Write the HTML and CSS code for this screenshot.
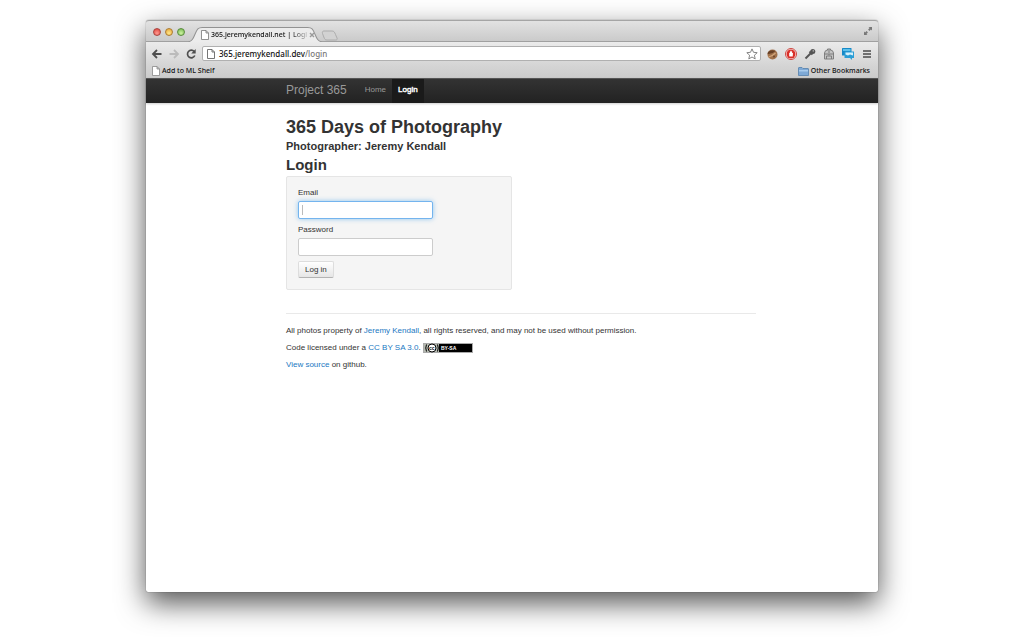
FILE: index.html
```html
<!DOCTYPE html>
<html lang="en">
<head>
<meta charset="utf-8">
<meta name="viewport" content="width=device-width, initial-scale=1">
<title>365.jeremykendall.net | Login</title>
<link rel="stylesheet" href="styles.css">
</head>
<body>
<div class="window">
  <header class="chrome">
    <div class="tabstrip">
      <div class="lights">
        <button class="light red" aria-label="Close"></button>
        <button class="light amber" aria-label="Minimize"></button>
        <button class="light green" aria-label="Zoom"></button>
      </div>
      <div class="tab">
        <svg class="tab-shape" viewBox="0 0 132 15" preserveAspectRatio="none" aria-hidden="true"><path d="M0 15C4 14 5 12 7 7C9 2 10 .5 14 .5H118C122 .5 123 2 125 7C127 12 128 14 132 15Z" fill="#ececec"/><path d="M0 15C4 14 5 12 7 7C9 2 10 .5 14 .5H118C122 .5 123 2 125 7C127 12 128 14 132 15" fill="none" stroke="#929292"/></svg>
        <svg class="page-icon" viewBox="0 0 8 10" aria-hidden="true"><path d="M.5.5h4.500l2.500 2.500v6.500h-7zM5 .5v2.500h2.500" fill="#fff" stroke="#777" stroke-width=".8"/></svg>
        <span class="tab-title">365.jeremykendall.net | Logi</span>
        <button class="tab-close" aria-label="Close tab"><svg viewBox="0 0 6 6"><path d="M1 1l4 4M5 1L1 5" stroke="#999" stroke-width="1.400"/></svg></button>
      </div>
      <button class="new-tab" aria-label="New tab"><svg viewBox="0 0 18 11"><path d="M3 1H11C13 1 13.500 2 14.500 4.500L16 8C16.500 9.500 16 10 14.500 10H6C4 10 3.500 9 2.800 7L1.500 3.500C1 2 1.500 1 3 1Z" fill="#d2d2d2" stroke="#a8a8a8" stroke-width=".9"/></svg></button>
      <button class="fullscreen" aria-label="Full screen"><svg viewBox="0 0 10 10"><path d="M5.500 1H9v3.500L7.900 3.400 6.400 4.900 5.100 3.600 6.600 2.100zM4.500 9H1V5.500l1.100 1.100L3.600 5.100 4.900 6.400 3.400 7.900z" fill="#777"/></svg></button>
    </div>
    <div class="toolbar">
      <button class="tool" aria-label="Back"><svg viewBox="0 0 12 12"><path d="M6 2L2 6l4 4M2 6h8.500" fill="none" stroke="#4e4e4e" stroke-width="1.800"/></svg></button>
      <button class="tool" aria-label="Forward"><svg viewBox="0 0 12 12"><path d="M6 2l4 4-4 4M10 6H1.500" fill="none" stroke="#bbb" stroke-width="1.800"/></svg></button>
      <button class="tool" aria-label="Reload"><svg viewBox="0 0 12 12"><path d="M9.200 3.500A3.800 3.800 0 1 0 9.800 7.500" fill="none" stroke="#4e4e4e" stroke-width="1.700"/><path d="M10.700 1v4.600H6.200z" fill="#4e4e4e"/></svg></button>
      <div class="omnibox">
        <svg class="page-icon" viewBox="0 0 8 10" aria-hidden="true"><path d="M.5.5h4.500l2.500 2.500v6.500h-7zM5 .5v2.500h2.500" fill="#fff" stroke="#666" stroke-width=".9"/></svg>
        <span class="url">365.jeremykendall.dev<span class="path">/login</span></span>
        <button class="star" aria-label="Bookmark this page"><svg viewBox="0 0 12 12"><path d="M6 .9l1.500 3.400 3.700.4-2.800 2.500.8 3.700L6 9l-3.200 1.900.8-3.700L.8 4.700l3.700-.4z" fill="#fff" stroke="#777" stroke-width=".9"/></svg></button>
      </div>
      <div class="extensions">
        <button class="tool" aria-label="Cookies"><svg viewBox="0 0 12 12"><circle cx="6.500" cy="6.500" r="5" fill="#a0714b"/><path d="M2 4Q5 1 9.500 3Q6 6.500 1.500 6z" fill="#684025"/><path d="M2.500 9Q6 8.500 9.500 5" stroke="#d3a67a" fill="none" stroke-width="1.200"/><circle cx="8" cy="8.500" r="1" fill="#704629"/></svg></button>
        <button class="tool" aria-label="Ad blocker"><svg viewBox="0 0 12 12"><circle cx="6" cy="6" r="5.500" fill="#fff" stroke="#c9302a" stroke-width=".9"/><circle cx="6" cy="6" r="4.500" fill="#d92f28"/><path d="M4.200 8.300V5l.7-.2V3.400h.7v-.6h.8v.6h.7v1.300l.9.500L7.700 8.600H4.900z" fill="#fff"/></svg></button>
        <button class="tool" aria-label="Eyedropper"><svg viewBox="0 0 12 12"><path d="M1.500 10.500L7 5" stroke="#555" stroke-width="2"/><path d="M5.500 3.500l3 3" stroke="#555" stroke-width="2"/><circle cx="8.800" cy="3.400" r="2.500" fill="#555"/><circle cx="9.300" cy="2.900" r=".8" fill="#aaa"/></svg></button>
        <button class="tool" aria-label="Backpack"><svg viewBox="0 0 12 12"><path d="M1.500 11V5Q2 2 4.500 2h3Q10 2 10.500 5v6z" fill="#c4c4c4" stroke="#808080"/><path d="M4.500 2V1h3v1M1.500 6h9M3.500 8h5v3M3.500 8v3M5 4h2M6 6v1.500" fill="none" stroke="#777" stroke-width=".9"/></svg></button>
        <button class="tool" aria-label="Chat"><svg viewBox="0 0 12 12"><rect x="0" y="0" width="9.500" height="7.500" rx=".6" fill="#1689c7"/><path d="M1 1h7.500v2H1z" fill="#5cc0ea"/><path d="M2.500 3.500H12V10h-2v2L8 10H2.500z" fill="#2a9dd5"/><path d="M3.500 4.500H11v3l-3-1-2 1-2.500-1z" fill="#d5f0fb"/></svg></button>
        <button class="tool" aria-label="Menu"><svg viewBox="0 0 12 12"><path d="M2 3h8M2 6h8M2 9h8" stroke="#4b4b4b" stroke-width="1.700"/></svg></button>
      </div>
    </div>
    <div class="bookmarks">
      <a class="bookmark" href="#"><svg class="page-icon" viewBox="0 0 8 10" aria-hidden="true"><path d="M.5.5h4.500l2.500 2.500v6.500h-7zM5 .5v2.500h2.500" fill="#fff" stroke="#888" stroke-width=".8"/></svg>Add to ML Shelf</a>
      <a class="bookmark" href="#"><svg class="folder" viewBox="0 0 11 9" aria-hidden="true"><path d="M.5 8.500V1Q.5.500 1 .5h3l1 1h5q.5 0 .5.500v6.500z" fill="#7ea9d6" stroke="#5480ac" stroke-width=".8"/><path d="M1 3h9v1.500H1z" fill="#a9cbec"/></svg>Other Bookmarks</a>
    </div>
  </header>
  <nav class="navbar">
    <div class="container nav-row">
      <a class="brand" href="#">Project 365</a>
      <a class="nav-link" href="#">Home</a>
      <a class="nav-link active" href="#">Login</a>
    </div>
  </nav>
  <main class="container">
    <h1>365 Days of Photography</h1>
    <h2>Photographer: Jeremy Kendall</h2>
    <h3>Login</h3>
    <form class="well">
      <label for="email">Email</label>
      <div class="field focused"><input id="email" type="text"></div>
      <label for="password">Password</label>
      <div class="field"><input id="password" type="password"></div>
      <button class="btn" type="button">Log in</button>
    </form>
    <footer class="footer">
      <p>All photos property of <a href="#">Jeremy Kendall</a>, all rights reserved, and may not be used without permission.</p>
      <p>Code licensed under a <a href="#">CC BY SA 3.0</a>. <svg class="license" viewBox="0 0 50 10" role="img" aria-label="Creative Commons"><rect x=".5" y=".5" width="49" height="9" fill="#000" stroke="#aaa"/><path d="M1 1h15v8H1z" fill="#b5bab0"/><circle cx="9" cy="5" r="4" fill="#fff" stroke="#000"/><path d="M3.500 1.500Q2 5 3.500 8.500M14.500 1.500Q16 5 14.500 8.500" stroke="#000" fill="none"/><text x="6" y="7" class="cc">cc</text><text x="18" y="7" class="by">BY-SA</text></svg></p>
      <p><a href="#">View source</a> on github.</p>
    </footer>
  </main>
</div>
</body>
</html>
```
FILE: styles.css
```css
* { box-sizing: border-box; }
body {
  margin: 0;
  min-height: 100vh;
  padding: 20px 146px 49px;
  display: flex;
  background: #fff;
  color: #333;
  font: 8px/11px "Liberation Sans", Arial, sans-serif;
  overflow-x: hidden;
}
button { padding: 0; border: 0; background: none; font: inherit; color: inherit; }
svg { display: block; }
a { color: #1a78c2; text-decoration: none; }
.window {
  flex: 1;
  min-width: 0;
  background: #fff;
  border-radius: 3px 3px 2px 2px;
  box-shadow: 0 0 1px rgba(0,0,0,.7), 0 11px 29px rgba(0,0,0,.68);
}
.chrome {
  color: #111;
  font: 500 7px/10px "Noto Sans", "Open Sans", sans-serif;
  background: #cfcfcf;
  border-radius: 3px 3px 0 0;
}
.tabstrip {
  display: flex;
  align-items: flex-end;
  height: 22px;
  padding: 0 5px 0 7px;
  border-radius: 3px 3px 0 0;
  border-top: 1px solid #a5a5a5;
  background: linear-gradient(#e2e2e2, #c9c9c9);
  box-shadow: inset 0 -1px #a0a0a0;
}
.lights { display: flex; gap: 4px; padding-bottom: 6px; }
.light { width: 8px; height: 8px; border: 1px solid; border-radius: 50%; }
.red { border-color: #a84540; background: radial-gradient(circle at 50% 70%, #ff9b91, #dc3c35); }
.amber { border-color: #ac7c32; background: radial-gradient(circle at 50% 70%, #ffe78b, #e4a130); }
.green { border-color: #5a8c3d; background: radial-gradient(circle at 50% 70%, #cdf3a1, #6fb44a); }
.tab {
  position: relative;
  display: flex;
  align-items: center;
  gap: 2px;
  width: 134px;
  height: 15px;
  margin-left: 3px;
  padding: 1px 11px 0 13px;
}
.tab-shape { position: absolute; inset: 0; width: 100%; height: 100%; }
.page-icon { position: relative; flex: none; width: 8px; height: 10px; }
.tab-title {
  position: relative;
  flex: 1;
  white-space: nowrap;
  mask-image: linear-gradient(90deg, #000 82%, rgba(0,0,0,.2));
}
.tab-close { position: relative; flex: none; width: 6px; height: 6px; }
.new-tab { width: 18px; height: 11px; margin: 0 auto 1px -1px; }
.fullscreen { width: 10px; height: 10px; margin-bottom: 6px; }
.toolbar {
  display: flex;
  align-items: center;
  gap: 5px;
  height: 23px;
  padding: 0 5px;
  background: linear-gradient(#ebebeb, #d5d5d5);
}
.tool { flex: none; width: 12px; height: 12px; }
.omnibox {
  flex: 1;
  display: flex;
  align-items: center;
  gap: 4px;
  height: 15px;
  padding: 0 2px 0 4px;
  background: #fff;
  border: 1px solid #b0b0b0;
  border-radius: 2px;
}
.url { flex: 1; font-size: 8px; }
.path { color: #777; }
.star { width: 12px; height: 12px; }
.extensions { display: flex; gap: 7px; }
.bookmarks {
  display: flex;
  justify-content: space-between;
  height: 13px;
  padding: 0 8px 1px 6px;
  background: linear-gradient(#d5d5d5, #cbcbcb);
}
.bookmark { display: flex; align-items: center; gap: 2px; color: #111; }
.folder { width: 11px; height: 9px; }
.container { width: 488px; max-width: 100%; margin: 0 auto; padding-left: 18px; }
.navbar {
  border-top: 1px solid #555;
  background: linear-gradient(#333, #222);
  box-shadow: 0 1px 2px rgba(0,0,0,.2);
}
.nav-row { display: flex; height: 24px; line-height: 22px; }
.brand { padding-right: 12px; color: #999; font-size: 12px; }
.nav-link { padding: 0 6px; color: #999; }
.active { background: #1a1a1a; color: #fff; -webkit-text-stroke: 0.4px #fff; }
h1, h2, h3 { margin: 0; font-weight: 700; }
h1 { padding-top: 13px; font-size: 18px; line-height: 22px; }
h2 { font-size: 11px; line-height: 16px; }
h3 { font-size: 15px; line-height: 22px; }
.well {
  width: 226px;
  margin: 0;
  padding: 10px 11px 11px;
  background: #f5f5f5;
  border: 1px solid #e5e5e5;
  border-radius: 2px;
}
.well label { display: block; margin-bottom: 3px; }
.field { margin-bottom: 5px; }
.field input {
  display: block;
  width: 135px;
  height: 18px;
  padding: 2px 3px;
  border: 1px solid #ccc;
  border-radius: 2px;
  background: #fff;
  font: inherit;
}
.focused { position: relative; }
.focused input {
  border-color: #74b4ee;
  box-shadow: 0 0 5px rgba(82,168,236,.6);
}
.focused::after {
  content: "";
  position: absolute;
  left: 4px;
  top: 4px;
  width: 1px;
  height: 10px;
  background: #bbb;
}
.btn {
  display: block;
  height: 17px;
  padding: 0 6px;
  border: 1px solid #ddd;
  border-bottom-color: #b3b3b3;
  border-radius: 2px;
  background: linear-gradient(#fff, #e6e6e6);
}
.footer { margin-top: 23px; padding-top: 11px; border-top: 1px solid #e9e9e9; }
.footer p { margin: 0 0 6px; line-height: 11px; }
.license { display: inline-block; width: 50px; height: 10px; vertical-align: middle; }
.cc { font: 700 5px "Liberation Sans", sans-serif; }
.by { font: 700 5px "Liberation Sans", sans-serif; fill: #fff; }
```
